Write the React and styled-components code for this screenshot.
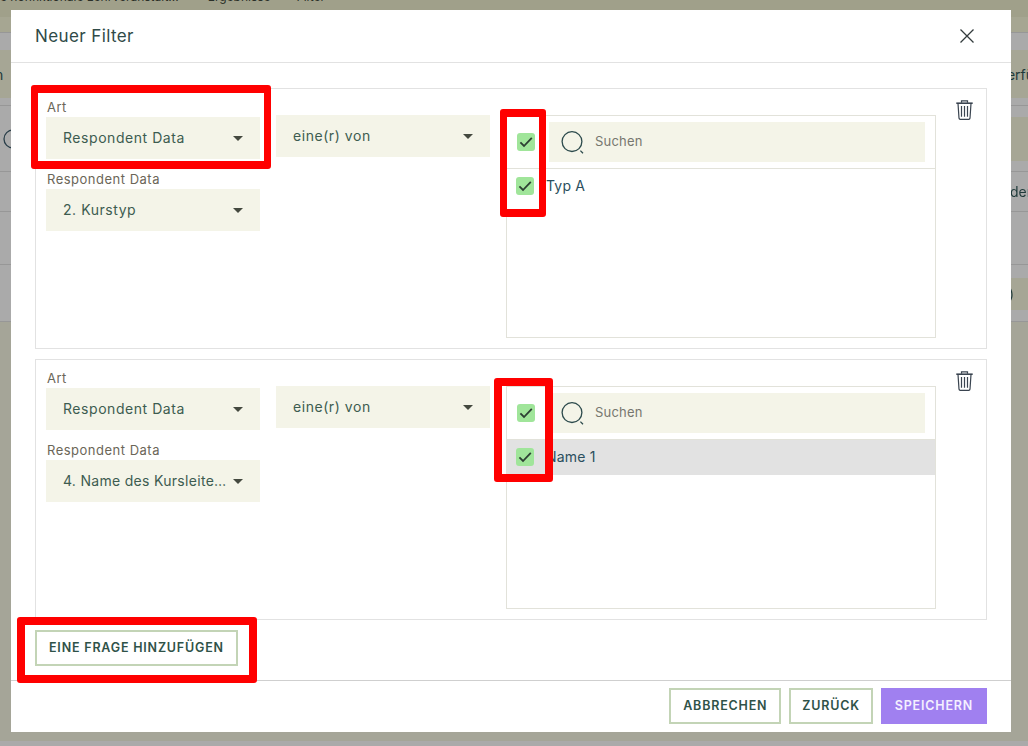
import React from 'react';
import styled, { createGlobalStyle } from 'styled-components';

const GlobalStyle = createGlobalStyle`
  html, body {
    margin: 0;
    padding: 0;
    height: 100%;
    overflow: hidden;
    background: #a6a696;
    font-family: Inter, "Liberation Sans", sans-serif;
  }
  * { box-sizing: border-box; }
`;

const OLIVE = '#a6a695';
const GREY = '#aaaaaa';

/* page behind the dialog, dimmed */
const Backdrop = styled.div`
  position: fixed;
  inset: 0;
  display: flex;
  flex-direction: column;
  overflow: hidden;
`;

const BackRow = styled.div`
  display: flex;
  flex: ${(p) => (p.$h ? `0 0 ${p.$h}px` : '1 1 auto')};
  border-bottom: ${(p) => (p.$line ? '1px solid #979797' : 'none')};
`;

const BackCell = styled.div`
  flex: 1 1 50%;
  min-width: 0;
  background: ${(p) => p.$bg};
  display: flex;
  align-items: center;
  padding-left: ${(p) => p.$pad || 0}px;
  font-size: 14px;
  color: #1f3a3a;
  white-space: nowrap;
  overflow: hidden;
`;

const ClippedLetter = styled.span`
  margin-left: -5px;
`;

const LensIcon = styled.svg`
  flex: 0 0 auto;
  margin-left: 3px;
`;

const Crumbs = styled.div`
  display: flex;
  flex: 0 0 17px;
  background: #a0a08a;
  font-size: 12px;
  color: #2a2f28;
  white-space: nowrap;
  overflow: hidden;
  line-height: 16px;
`;

const Crumb = styled.span`
  margin-top: -11px;
  margin-left: ${(p) => p.$gap}px;
`;

const Modal = styled.div`
  position: fixed;
  top: 10px;
  left: 11px;
  width: 1000px;
  height: 722px;
  background: #fff;
  display: flex;
  flex-direction: column;
`;

const Header = styled.header`
  flex: 0 0 53px;
  display: flex;
  align-items: center;
  justify-content: space-between;
  padding: 0 37px 1px 24px;
  border-bottom: 1px solid #e2e2e2;
`;

const Title = styled.h2`
  margin: 0;
  font-size: 17px;
  font-weight: 400;
  letter-spacing: 0.4px;
  color: #2f4a48;
`;

const Body = styled.div`
  flex: 1 1 auto;
  padding: 25px 24px 0;
  display: flex;
  flex-direction: column;
  gap: 10px;
`;

const Card = styled.section`
  border: 1px solid #e2e2e2;
  padding: 10px 0 10px 10px;
  display: grid;
  grid-template-columns: 214px 214px 430px auto;
  column-gap: 16px;
  align-items: start;
`;

const Column = styled.div`
  display: flex;
  flex-direction: column;
`;

const Label = styled.label`
  display: block;
  height: 18px;
  line-height: 16px;
  margin: ${(p) => (p.$second ? '12px' : '0')} 0 0 1px;
  font-size: 13px;
  letter-spacing: 0.5px;
  color: #6b6658;
`;

const Select = styled.div`
  height: 42px;
  margin-top: ${(p) => p.$offset || 0}px;
  background: #f4f4e8;
  padding: 0 17px;
  display: flex;
  align-items: center;
  gap: 3px;
  font-size: 14px;
  letter-spacing: 0.55px;
  color: #3d5c50;
`;

const SelectText = styled.span`
  flex: 1 1 auto;
  min-width: 0;
  padding-bottom: 2px;
  letter-spacing: ${(p) => (p.$tight ? '0.3px' : 'inherit')};
  white-space: nowrap;
  overflow: hidden;
  text-overflow: ellipsis;
`;

const Caret = styled.span`
  flex: 0 0 auto;
  width: 0;
  height: 0;
  border-left: 5px solid transparent;
  border-right: 5px solid transparent;
  border-top: 5px solid #44493f;
`;

const ListBox = styled.div`
  height: 223px;
  margin-top: 16px;
  border: 1px solid #e2e2da;
`;

const SearchRow = styled.div`
  height: 53px;
  padding: 6px 10px;
  display: flex;
  align-items: center;
  gap: 14px;
  border-bottom: 1px solid #e2e2da;
`;

const SearchField = styled.div`
  flex: 1 1 auto;
  height: 40px;
  background: #f4f4e8;
  padding-left: 12px;
  display: flex;
  align-items: center;
  gap: 11px;
  font-size: 13px;
  letter-spacing: 0.2px;
  color: #77776f;
`;

const SearchText = styled.span`
  padding-bottom: 2px;
`;

const ItemRow = styled.div`
  height: 35px;
  padding: 0 0 1px 9px;
  display: flex;
  align-items: center;
  gap: 12px;
  background: ${(p) => (p.$active ? '#e2e2e2' : 'transparent')};
  font-size: 14px;
  letter-spacing: 0.2px;
  color: #2b4f5e;
`;

const ItemText = styled.span`
  padding-bottom: 2px;
`;

const CheckBox = styled.span`
  flex: 0 0 18px;
  width: 18px;
  height: 18px;
  border-radius: 3px;
  background: #a0e59a;
  display: flex;
  align-items: center;
  justify-content: center;
`;

const TrashCell = styled.div`
  margin-top: 1px;
  margin-left: 4px;
  line-height: 0;
`;

const OutlineButton = styled.button`
  height: 36px;
  padding: 0 ${(p) => p.$pad || 12}px 1px;
  background: #fff;
  border: 2px solid #c3d4b6;
  font-family: inherit;
  font-size: 12.5px;
  font-weight: 600;
  letter-spacing: 0.8px;
  color: #2f5248;
  white-space: nowrap;
`;

const SaveButton = styled(OutlineButton)`
  background: #a080f0;
  border-color: #a080f0;
  color: #f4f0ff;
`;

const AddRow = styled.div`
  display: flex;
`;

const Footer = styled.footer`
  flex: 0 0 52px;
  border-top: 1px solid #cfcfcf;
  padding: 7px 24px;
  display: flex;
  justify-content: flex-end;
  gap: 8px;
`;

/* red annotation boxes drawn on top of the screenshot */
const Marker = styled.div`
  position: fixed;
  left: ${(p) => p.$x}px;
  top: ${(p) => p.$y}px;
  width: ${(p) => p.$w}px;
  height: ${(p) => p.$h}px;
  border: 8px solid #ff0000;
  border-left-width: ${(p) => p.$side || 8}px;
  border-right-width: ${(p) => p.$side || 8}px;
  border-radius: 3px;
  pointer-events: none;
`;

const CheckMark = () => (
  <svg width="14" height="12" viewBox="0 0 14 12" fill="none">
    <path d="M1.4 6.4 5 10 12.8 1.8" stroke="#2d3f33" strokeWidth="1.8" />
  </svg>
);

const SearchIcon = () => (
  <svg width="23" height="23" viewBox="0 0 23 23" fill="none">
    <circle cx="11" cy="10.6" r="9.9" stroke="#2c4a4c" strokeWidth="1.3" />
    <path d="M19.4 19.6 22 22.2" stroke="#2c4a4c" strokeWidth="1.3" />
  </svg>
);

const TrashIcon = () => (
  <svg width="17" height="20" viewBox="0 0 17 20" fill="none" stroke="#3a4450" strokeWidth="1.2">
    <path d="M5.5 2.8V.8h6v2" />
    <path d="M.3 3.2h16.4" strokeWidth="1.6" />
    <path d="M2 3.4 3 18.2c.1.7.5 1.1 1.2 1.1h8.6c.7 0 1.1-.4 1.2-1.1l1-14.8" />
    <path d="M5.5 6v10.8M8.5 6v10.8M11.5 6v10.8" />
  </svg>
);

const CloseIcon = () => (
  <svg width="14" height="14" viewBox="0 0 14 14" fill="none" stroke="#333b3d" strokeWidth="1.3">
    <path d="M.5.5 13.5 13.5M13.5.5.5 13.5" />
  </svg>
);

const backRows = [
  { h: 16, l: '#a6a692', r: '#a6a692', line: true },
  { h: 17, l: GREY, r: GREY },
  { h: 48, l: OLIVE, r: OLIVE, lText: 'n', rText: 'Verfügbar', rPad: 484 },
  { h: 8, l: GREY, r: GREY, line: true },
  { h: 11, l: GREY, r: GREY },
  { h: 44, l: GREY, r: OLIVE, lens: true },
  { h: 11, l: GREY, r: GREY, line: true },
  { h: 40, l: GREY, r: GREY, rText: 'der', rPad: 496, line: true },
  { h: 53, l: GREY, r: GREY, line: true },
  { h: 13, l: GREY, r: GREY },
  { h: 32, l: GREY, r: OLIVE, rText: '(0)', rPad: 481 },
  { h: 12, l: GREY, r: GREY, line: true },
  { l: '#a5a598', r: '#a5a598' },
  { h: 5, l: GREY, r: GREY },
];

const PageBehind = () => (
  <Backdrop>
    <Crumbs>
      <Crumb $gap={0}>e nonfiktionale Lehrveranstalt...</Crumb>
      <Crumb $gap={29}>Ergebnisse</Crumb>
      <Crumb $gap={26}>Filter</Crumb>
    </Crumbs>
    {backRows.map((row, i) => (
      <BackRow key={i} $h={row.h} $line={row.line}>
        <BackCell $bg={row.l}>
          {row.lText && <ClippedLetter>{row.lText}</ClippedLetter>}
          {row.lens && (
            <LensIcon width="24" height="24" viewBox="0 0 24 24" fill="none">
              <circle cx="10" cy="12" r="9" stroke="#2a3f4a" strokeWidth="1.3" />
            </LensIcon>
          )}
        </BackCell>
        <BackCell $bg={row.r} $pad={row.rPad}>{row.rText}</BackCell>
      </BackRow>
    ))}
  </Backdrop>
);

const FilterCard = ({ question, tight, item, active }) => (
  <Card>
    <Column>
      <Label>Art</Label>
      <Select>
        <SelectText>Respondent Data</SelectText>
        <Caret />
      </Select>
      <Label $second>Respondent Data</Label>
      <Select>
        <SelectText $tight={tight}>{question}</SelectText>
        <Caret />
      </Select>
    </Column>
    <Select $offset={16}>
      <SelectText>eine(r) von</SelectText>
      <Caret />
    </Select>
    <ListBox>
      <SearchRow>
        <CheckBox><CheckMark /></CheckBox>
        <SearchField>
          <SearchIcon />
          <SearchText>Suchen</SearchText>
        </SearchField>
      </SearchRow>
      <ItemRow $active={active}>
        <CheckBox><CheckMark /></CheckBox>
        <ItemText>{item}</ItemText>
      </ItemRow>
    </ListBox>
    <TrashCell><TrashIcon /></TrashCell>
  </Card>
);

export default function App() {
  return (
    <>
      <GlobalStyle />
      <PageBehind />
      <Modal>
        <Header>
          <Title>Neuer Filter</Title>
          <CloseIcon />
        </Header>
        <Body>
          <FilterCard question="2. Kurstyp" item="Typ A" />
          <FilterCard question="4. Name des Kursleite…" tight item="Name 1" active />
          <AddRow>
            <OutlineButton>EINE FRAGE HINZUFÜGEN</OutlineButton>
          </AddRow>
        </Body>
        <Footer>
          <OutlineButton>ABBRECHEN</OutlineButton>
          <OutlineButton $pad={11}>ZURÜCK</OutlineButton>
          <SaveButton>SPEICHERN</SaveButton>
        </Footer>
      </Modal>
      <Marker $x={31} $y={85} $w={240} $h={84} $side={7} />
      <Marker $x={500} $y={109} $w={46} $h={108} $side={7} />
      <Marker $x={494} $y={378} $w={59} $h={104} />
      <Marker $x={17} $y={617} $w={240} $h={66} />
    </>
  );
}
